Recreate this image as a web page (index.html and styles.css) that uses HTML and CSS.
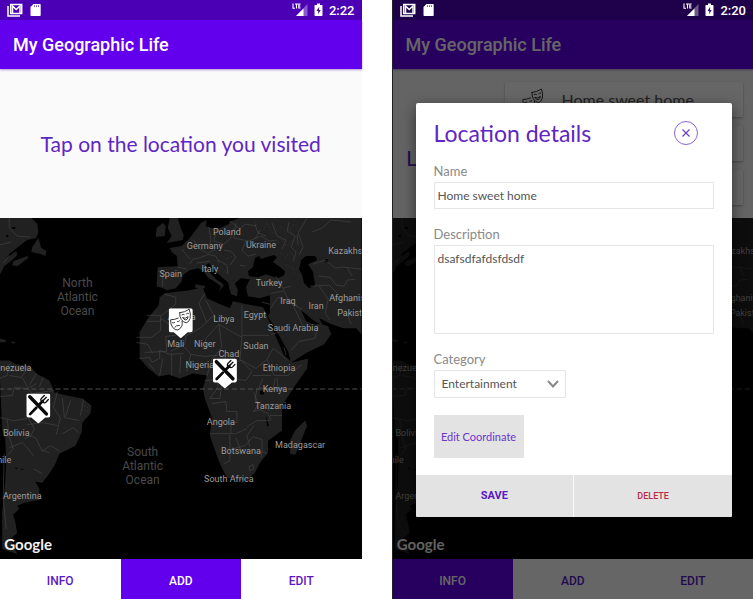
FILE: index.html
```html
<!DOCTYPE html>
<html lang="en">
<head>
<meta charset="utf-8">
<meta name="viewport" content="width=device-width, initial-scale=1">
<title>My Geographic Life</title>
<link rel="stylesheet" href="styles.css">
</head>
<body>
<svg class="defs" aria-hidden="true">
  <symbol id="mail" viewBox="0 0 16 14">
    <path d="M1 3v10h12" fill="none" stroke="#fff" stroke-width="1.5"/>
    <path d="M3.700 1.500h11v9h-11z" fill="none" stroke="#fff" stroke-width="1.500"/>
    <path d="M5.500 10V3l3.700 3.500L13 3v7" fill="none" stroke="#fff" stroke-width="1.500"/>
  </symbol>
  <symbol id="sdcard" viewBox="0 0 11 14">
    <path d="M3.500 1H10q.7 0 .7.7v10.600q0 .7-.7.7H1.200q-.7 0-.7-.7V4z" fill="#fff"/>
    <path d="M4.500 2.200v1.800M6.500 2.200v1.800M8.500 2.200v1.800" stroke="#5a2ab0" stroke-width=".8"/>
  </symbol>
  <symbol id="signal" viewBox="0 0 16 14">
    <path d="M15.500 1v12H4z" fill="#fff" opacity=".35"/>
    <path d="M11.500 5.500V13H4z" fill="#fff"/>
    <path d="M1 .5v4.800h2M3 1h3M4.500 1v4.500M8.600 1H6.800v4h1.800M6.800 3h1.600" fill="none" stroke="#fff" stroke-width="1.100"/>
  </symbol>
  <symbol id="battery" viewBox="0 0 9 14">
    <path d="M3 .5h3V2h1.700q.8 0 .8.8v9.400q0 .8-.8.800H1.300q-.8 0-.8-.8V2.800q0-.8.8-.8H3z" fill="#fff"/>
    <path d="M5.200 3.800 2.500 8h1.700v3.200L6.700 7H5z" fill="#3c0a90"/>
  </symbol>
  <symbol id="masks" viewBox="0 0 24 24">
    <g fill="none" stroke="#222" stroke-width=".9" stroke-linecap="round" stroke-linejoin="round">
      <path d="M11 4.500Q16 4 20.500 1q1.800 5 .8 9.200-1 3.600-3.800 4.300-3-.4-5-3.300Q10.600 8 11 4.500z"/>
      <path d="M13.200 6.500q1.200-.9 2.300-.1M17.600 5.600q1-1 2.100-.5M14 9.500q2.800 1.500 5.300-1.200-.3 3.200-2.300 3.400-2-.1-3-2.200"/>
      <path d="M9.500 9.800Q6 11.500 1.800 11.500q-.2 4.600 2.200 7.700 2.300 2.800 5.200 2.500 2.900-1.200 4-4.600.5-2 .2-4.200"/>
      <path d="M3.800 14.500q1.200.4 2.200-.4M8.800 13.300q1 .2 2-.7M6 19q1-2.200 4.700-2"/>
    </g>
  </symbol>
  <symbol id="cutlery" viewBox="0 0 24 24">
    <path d="M3.500 3.300 20 20.300" stroke="#0a0a0a" stroke-width="3.500" stroke-linecap="round"/>
    <path d="M3.800 20.500 10 14.200M12.500 11.500 16.500 7.500" stroke="#0a0a0a" stroke-width="2.700" stroke-linecap="round"/>
    <path d="M15.500 8.500q-2.200-2.200.2-4.200L18 2M17 6.800l3-3M15.800 8q2 2.400 4.200.200L22 6" fill="none" stroke="#0a0a0a" stroke-width="1.300" stroke-linecap="round"/>
  </symbol>
  <symbol id="pin" viewBox="0 0 24 30">
    <path d="M2 0h20q2 0 2 2v20q0 2-2 2h-3L12 30 5 24H2q-2 0-2-2V2q0-2 2-2z" fill="#fff"/>
  </symbol>
  <symbol id="world" viewBox="0 0 362 340" preserveAspectRatio="xMidYMid slice">
    <rect x="-400" y="-400" width="1200" height="1200" fill="#000"/>
    <g fill="#212121">
      <path d="M0 0H32l6 6 1 8-2 6-9 2-8 6-10 8-4 5 11-8 1 4-5 5-8 6-3 6-2 3z"/>
      <path d="m33 29 6-9 3 10 5 3-1 5-5-2-9-2zM14 43l14-5 1 2-11 8-5-1zM0 120l7 2-1 2H0zM12 123l4 1v1h-4z"/>
      <path d="M0 142h10l7 4 13 1 7 8 13 7 3 7 2 5 12 3 16 3 9 7-1 8-8 9-1 10-6 13-16 8-4 10-6 10-7 9-7-1 4 7v11l-15 3-7 3 2 3-6 6 2 7 2 11-7 6 7 15-15-5v-37l3-30 1-20-1-23-3-8z"/>
      <path d="m163 5-6 5-1 9 9-1 1-10zM170 0h8l3 10 3 7-1 5-16 3 5-7-4-8z"/>
      <path d="M362 0H240l-8 3-9 1-3 5-14-1 1-6-6 3-5 7-6 8-8 8-12 2 2 4 5 4 1 10-20 1-1 19 6 2 4 2 9-2 6-7 1-6 7-5 8-2 5 2 5 7 9 6 4 3-2 5 5-6-3-3-5-3-7-8-3-6 3-2 5 6 9 9 5 4 3 12 6 2 1-6-3-7 6-5 9 1-4 8 2 9 12 2 10-3v17l-2 4 8 16 12 20 3 10 16-10 17-8 7-10-3-8-6-2-3-6 10 5 14 5h13l7 8 5-3z"/>
      <path d="m165 75 25-3 13-3 4 11 11 5 12 5 3-7 14 3 16 3 4 8 13 27 8 15 4 5 16-4-1 10-12 17-13 20v25l-14 10v12l-8 10-5 10-8 8-20-3-7-14-10-28 2-18-7-19-2-10 4-13-14-2-13 5-11-4-10 2-10-8-9-10v-26l9-15 10-12 1-8zM305 202l2 5-9 23-3 6-5-1v-13l5-10zM196 66l10 2-3 3-8-2z"/>
    </g>
    <g fill="#000">
      <path d="m255 40 4-2 2 3 6-2 7-2 3 2-4 5 6 4 6 5-1 4-6 3-12-4-8 3-9-1-1-5 5-4zM301 42l5-4 9 0 2 4-9 4 5 8 2 13-6 3-5-5-2-8-3-6zM266 96l7 10 7 13 8 14 2 9-6-5-11-25zM301 92l5 4 7 6 7 4-7 0-7-3zM207 1l8 2 12-2 4-1-2 6-11 5-11-2zM13 9h3v2h-3zM7 17h2v2H7zM16 249h2v1h-2zM22 250h2v1h-2zM325 41h3v3h-3zM260 172h4v4h-4zM266 197l3 10-2 1z"/>
    </g>
    <g fill="none" stroke="#474747" stroke-width=".6">
      <path d="M10 0v10l8 8 13 1M0 27l12-3M4 45l6-8M182 31l8 10M158 53l5 1v14M178 49l9 2M190 46l3-5 6-1 8-3M197 45l13-2M194 22l6 9 8 4 8-4M209 9l2 12-1 7M217 11l-3 12 10 3 6-5 4-11M230 3l10 8 5-5 11 2M236 5l-2 15 15 3 12-5 8 5 8-1M246 23l-4 9 6 6 8-2M224 32l7 1 5 6-6 8M218 42l9 5 1 9M207 36l9 2 3 6M255 6l3 9 8 3M272 5l5 13 9 4-4 9M289 4l-2 9 8 5-4 11 5 5-3 9M307 0l-9 15 5 14-4 8M312 14l10-4 9-8 20 2M313 46l12-4 10 8 8-1 19 2M318 58l12 1 6 8 8 1 3-6 8-1M347 50l5 8M310 68l19-1 8 8M276 58l7 12 8-2M267 62l13 3M271 75l12-2M283 71l7 14 12 6M270 91l8-12 15 7M290 84l8 4M319 68l9 13-3 14 5 7M330 79l20 4M345 91l6 15M346 84l13-6M297 17l1 10M260 12l-5 9M240 47l5 1M262 84l8 2"/>
      <path d="M165 76l11 3v7l-15 12v5h-14M161 100v12l-9 7h-15M147 97h14M161 100l25 18 14-8 14-13-8-15M176 117l-10 1 1 15-22 1M137 124l11 2 5 9M205 75l-6 10 8 19M242 87v32M242 119l-23-13-13 14-1 10M242 117h27M219 106l3 23-10 12M186 118l-1 8-14 7M242 119l-2 22 16 9 11-9 6-11 14 11M185 129l6 7 14 2 13-1M191 136l-4 17M140 140l10-1 2 5 8-4v-8M149 145l6 7M160 132l10 4 14-1M163 140l-3 17M172 135v22M181 137l-1 18M212 141l-5 17M224 135l4 12 13-5M241 142l11 11-6 9-7-1-13-3-3-10M267 141l7 16h14l14-11M253 157l18 0M263 160l-4 9 14 3 2-12M277 159l1 12M205 162l13-1v8l-8 11M210 180h10l2-16M212 185l14-2 1 10h10v11h-6v11M210 215h26l11-5M254 174l4 11-4 8M257 170l-2 12 15 10M253 193l7-2 8 4 3 7M270 197h12M247 208l10-6 13 0M254 207l-7 10 3 11M230 216v26l-6 3M230 231l15-4 8-9 9 3v12l5 2M249 248l4-2 1 4-4 2zM236 219l5 13M259 233l3 1-1 5"/>
      <path d="M0 160l8-3 2-12M10 157l12 2 4-6M23 159l6 11 8-5M37 155l-7 12M44 159l-4 9M0 178l13-1 2-8 13 1 5 5 22-3M0 199l15 3 13-2M29 200l6 10-4 8M8 201l2 17 4 12-5 6M10 229l13-5 4 4 7 9M25 220l7-3 5 3 5 11 8 3M28 206l16-2 14 3M58 173l-4 16 7 10-4 17M63 180l2 19 15 3M71 182l-5 16M84 181l-3 16M63 215l11-6 5 5M42 233l9-6 10 6M34 250l9 5M5 235l-1 45 3 30"/>
      <path d="m293 87 10 21M271 116l8-2M291 132l8-9 16-3 3-14M286 137l-2-8"/>
    </g>
    <g fill="none" stroke="#3d3d3d" stroke-width=".7" stroke-dasharray="1 2">
      <path d="M255 4l7 10 5-9 6 11 8-8 6 7 7-9 8 7M268 22l8 4 6-6 4 8 8-7M280 35l6 4 5-5 4 8M286 47l7 3 1 6M288 10l10 12M216 34l11 7 9-5M222 50l8 8M82 186l6 3 2-5M82 191l7 2"/>
    </g>
    <path d="M0 170.500h362" stroke="#505050" stroke-dasharray="5 3"/>
    <g class="country">
      <text x="227" y="17">Poland</text><text x="205" y="31">Germany</text><text x="261" y="30">Ukraine</text><text x="328" y="36" class="from">Kazakhstan</text>
      <text x="171" y="59">Spain</text><text x="210" y="54">Italy</text><text x="269" y="68">Turkey</text><text x="288" y="86">Iraq</text><text x="316" y="91">Iran</text>
      <text x="329" y="83" class="from">Afghanistan</text><text x="337" y="98" class="from">Pakistan</text>
      <text x="224" y="104">Libya</text><text x="255" y="100">Egypt</text><text x="293" y="113">Saudi Arabia</text><text x="182" y="102">Algeria</text>
      <text x="176" y="129">Mali</text><text x="205" y="129">Niger</text><text x="229" y="139">Chad</text><text x="256" y="131">Sudan</text><text x="200" y="150">Nigeria</text>
      <text x="279" y="153">Ethiopia</text><text x="275" y="173">Kenya</text><text x="273" y="190">Tanzania</text><text x="221" y="206">Angola</text><text x="241" y="235">Botswana</text>
      <text x="300" y="229">Madagascar</text><text x="229" y="263">South Africa</text><text x="17" y="217">Bolivia</text><text x="12" y="244" class="to">Chile</text><text x="23" y="280">Argentina</text><text x="32" y="153" class="to">Venezuela</text>
    </g>
    <g class="ocean">
      <text x="78" y="69">North</text><text x="78" y="83">Atlantic</text><text x="78" y="97">Ocean</text>
      <text x="143" y="237">South</text><text x="143" y="251">Atlantic</text><text x="143" y="265">Ocean</text>
    </g>
    <use href="#pin" x="169" y="90" width="24" height="30"/><use href="#masks" x="169" y="90" width="24" height="24"/>
    <use href="#pin" x="213" y="140" width="24" height="30"/><use href="#cutlery" x="213" y="140" width="24" height="24"/>
    <use href="#pin" x="27" y="175" width="24" height="30"/><use href="#cutlery" x="27" y="175" width="24" height="24"/>
    <text class="brand" x="5" y="331">Google</text>
  </symbol>
</svg>

<main class="screens">
  <section class="phone">
    <div class="status">
      <svg class="i-mail"><use href="#mail"/></svg><svg class="i-card"><use href="#sdcard"/></svg>
      <svg class="i-signal"><use href="#signal"/></svg><svg class="i-battery"><use href="#battery"/></svg><time>2:22</time>
    </div>
    <header class="appbar"><h1>My Geographic Life</h1></header>
    <div class="panel prompt"><p>Tap on the location you visited</p></div>
    <svg class="map" role="img" aria-label="World map"><use href="#world"/></svg>
    <nav class="tabs"><button>INFO</button><button class="active">ADD</button><button>EDIT</button></nav>
  </section>

  <section class="phone framed">
    <div class="status over">
      <svg class="i-mail"><use href="#mail"/></svg><svg class="i-card"><use href="#sdcard"/></svg>
      <svg class="i-signal"><use href="#signal"/></svg><svg class="i-battery"><use href="#battery"/></svg><time>2:20</time>
    </div>
    <header class="appbar"><h1>My Geographic Life</h1></header>
    <div class="panel visited">
      <h2>Visited Locations</h2>
      <ul>
        <li><svg class="i-masks"><use href="#masks"/></svg><span>Home sweet home</span></li>
        <li></li>
        <li></li>
      </ul>
    </div>
    <svg class="map" role="img" aria-label="World map"><use href="#world"/></svg>
    <nav class="tabs"><button class="active">INFO</button><button>ADD</button><button>EDIT</button></nav>

    <div class="scrim">
      <form class="dialog" role="dialog" aria-labelledby="dialog-title">
        <div class="dialog-body">
          <div class="dialog-head">
            <h2 id="dialog-title">Location details</h2>
            <button type="button" class="close" aria-label="Close"><svg viewBox="0 0 10 10"><path d="m1.500 1.500 7 7m0-7-7 7"/></svg></button>
          </div>
          <div class="field">
            <label for="name">Name</label>
            <input id="name" type="text" value="Home sweet home">
          </div>
          <div class="field">
            <label for="description">Description</label>
            <textarea id="description" spellcheck="false">dsafsdfafdsfdsdf</textarea>
          </div>
          <div class="field">
            <label for="category">Category</label>
            <div class="picker">
              <select id="category"><option>Entertainment</option></select>
              <svg viewBox="0 0 12 8"><path d="m1 1 5 5.500L11 1"/></svg>
            </div>
          </div>
          <button type="button" class="coordinate">Edit Coordinate</button>
        </div>
        <div class="actions"><button type="button" class="save">SAVE</button><button type="button" class="delete">DELETE</button></div>
      </form>
    </div>
  </section>
</main>
</body>
</html>
```

FILE: styles.css
```css
* { box-sizing: border-box; }

body {
  margin: 0;
  background: #fff;
  font-family: Roboto, sans-serif;
}

h1, h2, p, ul { margin: 0; padding: 0; font-weight: 400; }
button, input, textarea, select { margin: 0; border: 0; border-radius: 0; font: inherit; }

.defs { position: absolute; width: 0; height: 0; }

.screens {
  display: grid;
  grid-template-columns: 1fr 1fr;
  gap: 30px;
  min-height: 100vh;
}

.phone {
  position: relative;
  display: flex;
  flex-direction: column;
  min-width: 0;
}
.framed { border-left: 1px solid #222; }

.status {
  display: flex;
  align-items: center;
  height: 20px;
  padding: 0 7px;
  background: #4b00b5;
  color: #fff;
  font-size: 13px;
  font-weight: 500;
}
.status.over { z-index: 2; background: #1f004a; }
.status time { margin-left: 6px; }
.i-mail { width: 16px; height: 14px; margin-right: 7px; }
.i-card { width: 11px; height: 14px; }
.i-signal { width: 16px; height: 14px; margin-left: auto; margin-right: 6px; }
.i-battery { width: 9px; height: 14px; }

.appbar {
  z-index: 1;
  display: flex;
  align-items: center;
  height: 49px;
  padding: 0 13px;
  background: #6200ee;
  color: #fff;
  box-shadow: 0 1px 2px rgba(70, 0, 160, .4);
}
.appbar h1 { font-size: 18px; font-weight: 500; }

.panel {
  height: 149px;
  background: #fafafa;
  color: #5f26c4;
  font-family: Lato, sans-serif;
}
.prompt {
  display: flex;
  align-items: center;
  justify-content: center;
  font-size: 21px;
}

.visited {
  display: grid;
  grid-template-columns: 5fr 12fr;
  align-items: center;
  gap: 4px;
  padding: 8px 10px;
}
.visited h2 { font-size: 22px; line-height: 27px; text-align: center; }
.visited ul { display: grid; gap: 9px; list-style: none; }
.visited li {
  display: flex;
  align-items: center;
  gap: 16px;
  height: 35px;
  padding: 0 16px;
  background: #fff;
  color: #555;
  font-size: 16px;
  box-shadow: 0 1px 2px rgba(0, 0, 0, .3);
}
.i-masks { width: 24px; height: 24px; }

.map { display: block; flex: 1; width: 100%; min-height: 0; background: #000; }
.country { fill: #9c9c9c; font: 9px Roboto, sans-serif; text-anchor: middle; }
.country .from { text-anchor: start; }
.country .to { text-anchor: end; }
.ocean { fill: #4a4a4a; font: 12px Roboto, sans-serif; text-anchor: middle; }
.brand { fill: #f2f2f2; font: 700 15px Lato, sans-serif; }

.tabs { display: grid; grid-template-columns: repeat(3, 1fr); height: 40px; }
.tabs button {
  padding: 3px 0 0;
  background: #fff;
  color: #5a18c4;
  font-size: 12px;
  font-weight: 500;
}
.tabs .active { background: #6200ee; color: #fff; }

.scrim {
  position: absolute;
  inset: 0;
  z-index: 1;
  display: flex;
  align-items: center;
  justify-content: center;
  padding: 20px 21px 0 23px;
  background: rgba(0, 0, 0, .6);
}

.dialog {
  width: 100%;
  overflow: hidden;
  border-radius: 2px;
  background: #fff;
  box-shadow: 0 4px 14px rgba(0, 0, 0, .5);
  font-family: Lato, sans-serif;
}
.dialog-body { padding: 18px 18px 17px; }
.dialog-head {
  display: flex;
  align-items: center;
  justify-content: space-between;
  height: 24px;
  margin-bottom: 18px;
  padding-right: 16px;
}
.dialog-head h2 { color: #5f26c4; font-size: 23px; }
.close {
  display: grid;
  place-items: center;
  width: 24px;
  height: 24px;
  padding: 0;
  border: 1px solid #8a62d4;
  border-radius: 50%;
  background: none;
}
.close svg { width: 10px; height: 10px; fill: none; stroke: #6a42c0; stroke-width: 1.200; }

.field { margin-bottom: 17px; }
.field label {
  display: block;
  height: 19px;
  color: #8a8a8a;
  font-size: 13px;
  line-height: 16px;
}
.field input, .field textarea, .field select {
  display: block;
  width: 100%;
  border: 1px solid #e6e6e6;
  background: #fff;
  color: #555;
  font-size: 12px;
}
.field input { height: 27px; padding: 0 3px; }
.field textarea { height: 89px; padding: 5px 3px; resize: none; }
.picker { position: relative; width: 132px; }
.field select { height: 28px; padding: 0 7px; appearance: none; }
.picker svg {
  position: absolute;
  top: 10px;
  right: 7px;
  width: 12px;
  height: 8px;
  fill: none;
  stroke: #888;
  stroke-width: 2;
  pointer-events: none;
}
.coordinate {
  display: block;
  width: 90px;
  height: 43px;
  padding: 0;
  background: #e3e3e3;
  color: #6a35cc;
  font-size: 11px;
}
.actions { display: grid; grid-template-columns: 1fr 1fr; gap: 1px; height: 42px; background: #fafafa; }
.actions button { background: #e3e3e3; font-family: Roboto, sans-serif; }
.save { color: #5a18c4; font-size: 11px; font-weight: 700; }
.delete { color: #b82a4a; font-size: 9px; font-weight: 500; }
```
